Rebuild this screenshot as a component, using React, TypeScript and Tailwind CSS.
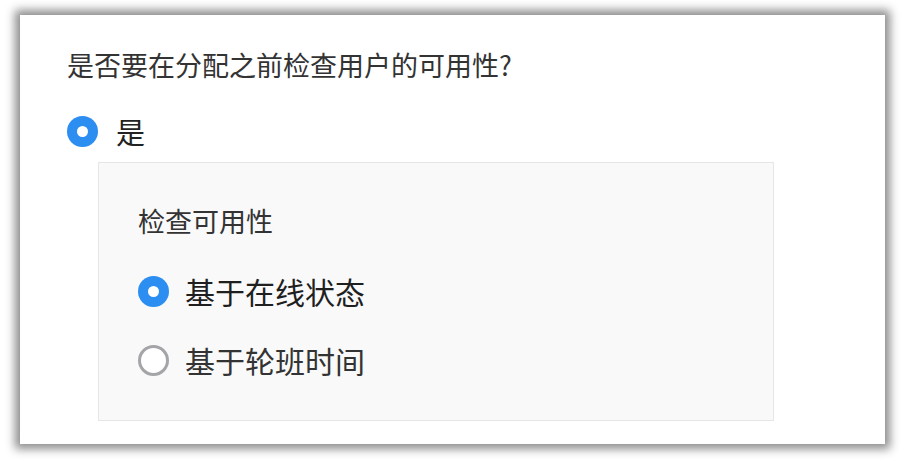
const font = { fontFamily: '"Noto Sans CJK SC", "Noto Sans", sans-serif' };

function Radio({ checked }: { checked: boolean }) {
  return checked ? (
    <span className="flex h-[31px] w-[31px] shrink-0 items-center justify-center rounded-full bg-[#2b8ef0]">
      <span className="h-[11px] w-[11px] rounded-full bg-white" />
    </span>
  ) : (
    <span className="h-[31px] w-[31px] shrink-0 rounded-full border-[3px] border-[#a3a5a8] bg-white" />
  );
}

export default function App() {
  return (
    <div className="h-[461px] w-[905px] bg-white pl-[20px] pt-[15px]" style={font}>
      <div className="h-[429px] w-[865px] bg-white pl-[47px] pt-[30px] shadow-[0_0_9px_5px_rgba(0,0,0,0.45)]">
        <p className="text-[27px] leading-[40px] text-[#333]">是否要在分配之前检查用户的可用性?</p>
        <label className="mt-[26px] flex items-center gap-[18px]">
          <Radio checked />
          <span className="text-[29px] leading-[40px] text-[#222]">是</span>
        </label>
        <div className="ml-[31px] mt-[11px] h-[259px] w-[676px] border border-[#e6e6e6] bg-[#f9f9f9] pl-[39px] pt-[38px]">
          <p className="text-[27px] leading-[40px] text-[#333]">检查可用性</p>
          <div className="mt-[30px] flex flex-col gap-[29px]">
            <label className="flex items-center gap-[16px]">
              <Radio checked />
              <span className="text-[30px] leading-[40px] text-[#1f1f1f]">基于在线状态</span>
            </label>
            <label className="flex items-center gap-[16px]">
              <Radio checked={false} />
              <span className="text-[30px] leading-[40px] text-[#333]">基于轮班时间</span>
            </label>
          </div>
        </div>
      </div>
    </div>
  );
}
